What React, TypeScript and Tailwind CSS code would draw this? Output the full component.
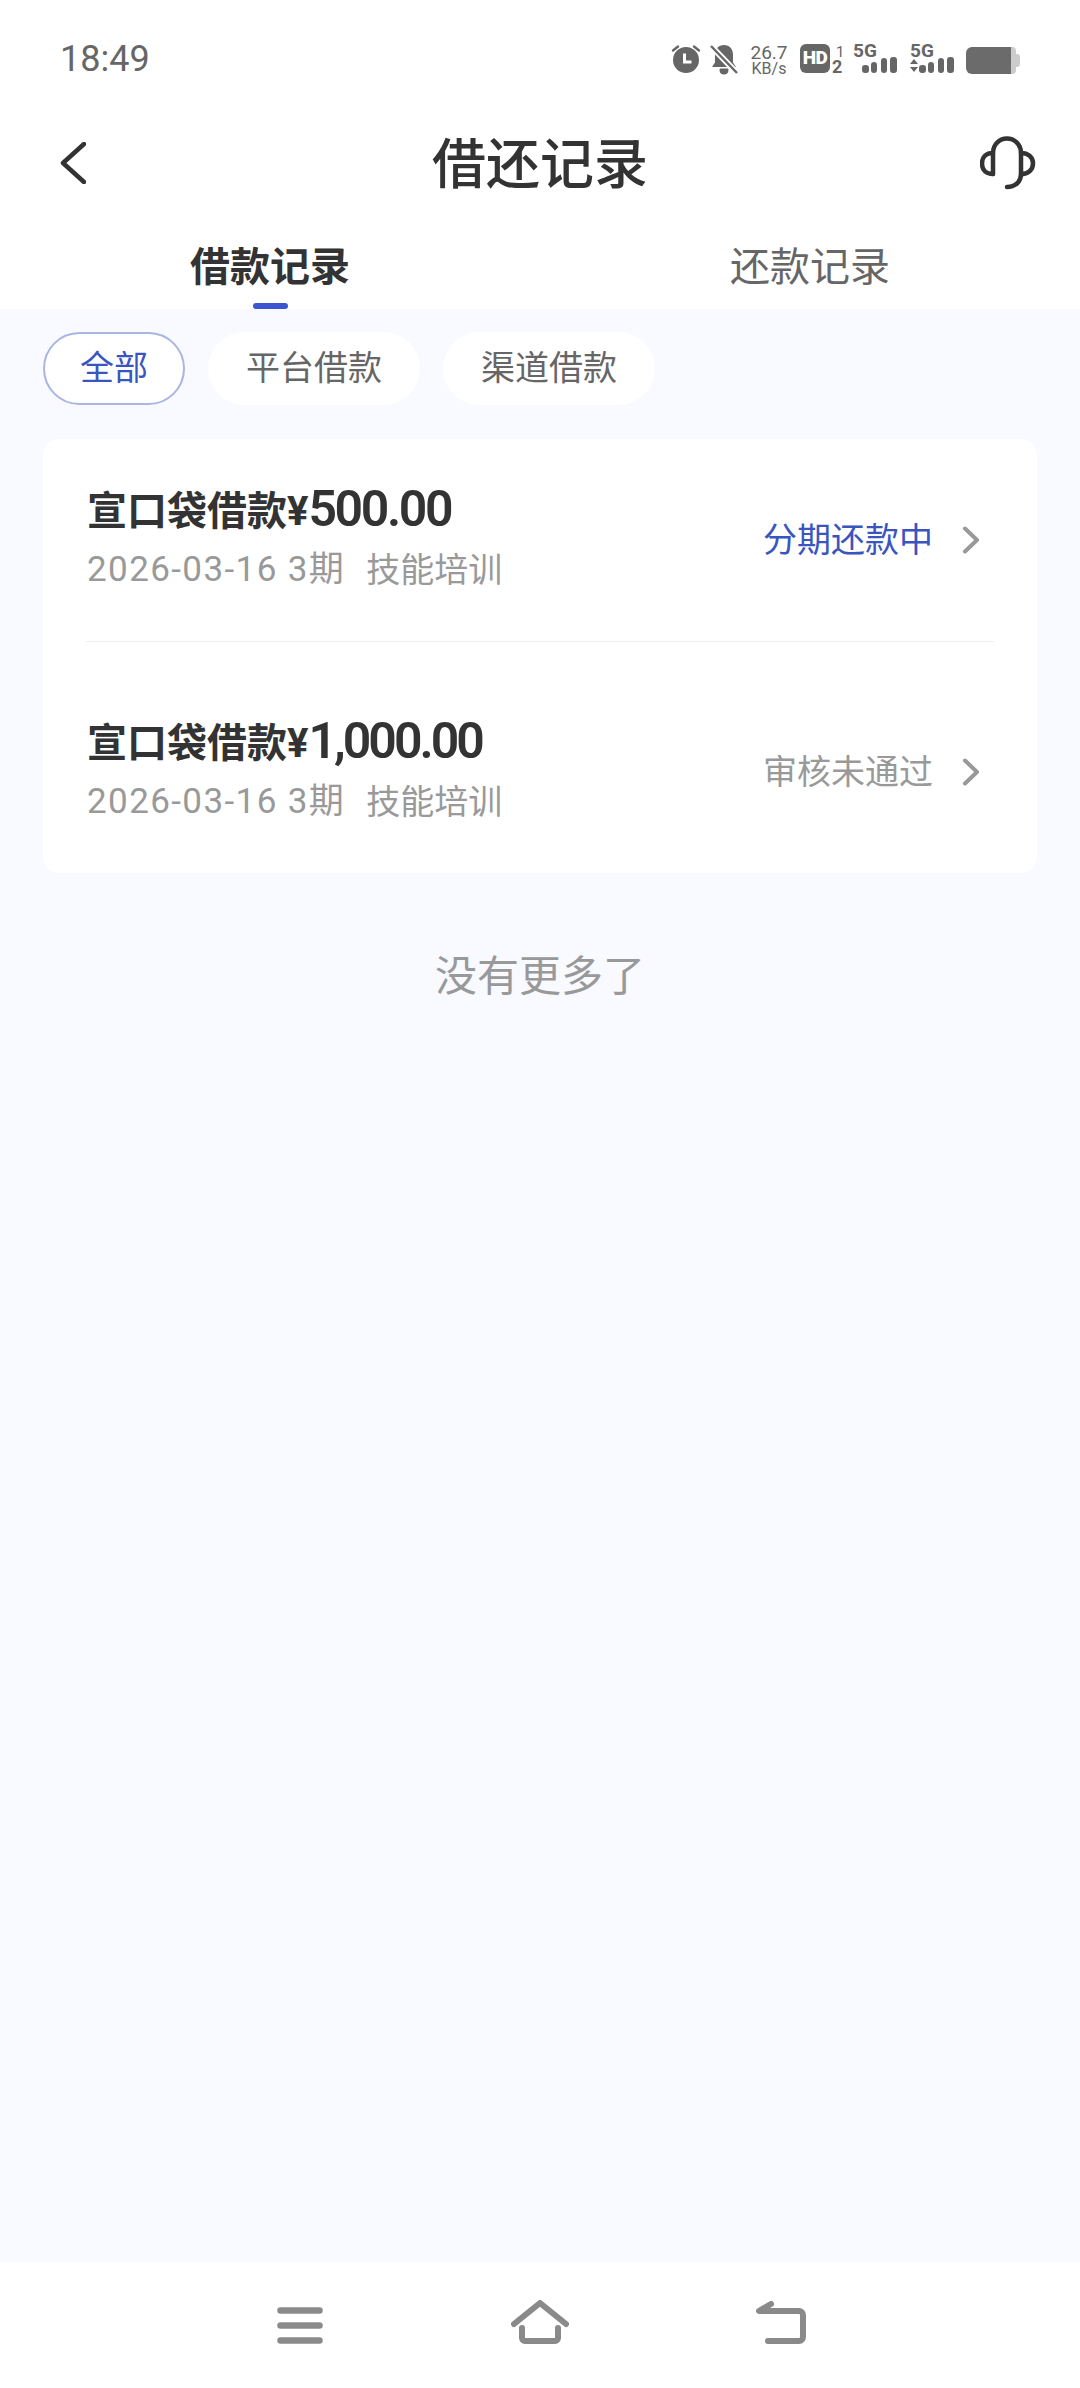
const font = 'font-["Roboto","Noto_Sans_CJK_SC",sans-serif]'

function AlarmIcon() {
  return (
    <svg width="30" height="29" viewBox="0 0 30 29" fill="none">
      <circle cx="15" cy="16" r="13" fill="#666" />
      <path d="M2 6.500 7 2.500M28 6.500 23 2.500" stroke="#666" strokeWidth="2.400" strokeLinecap="round" />
      <path d="M13.500 9.500v8.500h7" stroke="#fff" strokeWidth="3" fill="none" />
    </svg>
  )
}

function BellOffIcon() {
  return (
    <svg width="28" height="31" viewBox="0 0 28 31" fill="none">
      <path d="M14 1c5.500 0 9 4 9 9.500v8l3 4.500H2l3-4.500v-8C5 5 8.500 1 14 1Z" fill="#666" />
      <path d="M10.500 25.500h7c0 2.500-1.500 4-3.500 4s-3.500-1.500-3.500-4Z" fill="#666" stroke="#666" strokeWidth="2" strokeLinejoin="round" />
      <path d="M1 2 27 29" stroke="#fff" strokeWidth="6" />
      <path d="M1 2 27 29" stroke="#666" strokeWidth="2.400" />
    </svg>
  )
}

function SignalBars({ arrows }: { arrows?: boolean }) {
  return (
    <svg width="44" height="16" viewBox="0 0 44 16" fill="#666">
      {arrows && <path d="M0 7h8L4 2ZM0 10h8l-4 5Z" />}
      <rect x="9" y="8" width="7" height="8" rx="3" />
      <rect x="18" y="5" width="6" height="11" rx="3" />
      <rect x="28" y="1" width="6" height="15" rx="3" />
      <rect x="37" y="0" width="7" height="16" rx="3" />
    </svg>
  )
}

function NetworkIcon({ arrows }: { arrows?: boolean }) {
  return (
    <div className="flex w-[44px] flex-col">
      <span className="h-[13px] text-[19px] leading-[13px] font-bold text-[#666]">5G</span>
      <SignalBars arrows={arrows} />
    </div>
  )
}

function Battery() {
  return (
    <svg width="54" height="27" viewBox="0 0 54 27">
      <path d="M44 0h2a4 4 0 0 1 4 4v3h1a3 3 0 0 1 3 3v7a3 3 0 0 1-3 3h-1v3a4 4 0 0 1-4 4h-2Z" fill="#ccc" />
      <path d="M6 0h39v27H6a6 6 0 0 1-6-6V6a6 6 0 0 1 6-6Z" fill="#6b6b6b" />
    </svg>
  )
}

function StatusBar() {
  return (
    <div className="flex h-[118px] items-start justify-between pt-[44px] pl-[60px] pr-[60px]">
      <span className="text-[36px] leading-[30px] text-[#666]">18:49</span>
      <div className="flex items-start">
        <AlarmIcon />
        <div className="ml-[9px]">
          <BellOffIcon />
        </div>
        <div className="ml-[12px] flex w-[38px] flex-col items-center text-[#666]">
          <span className="text-[19px] leading-[18px]">26.7</span>
          <span className="text-[16px] leading-[14px]">KB/s</span>
        </div>
        <div className="ml-[12px] flex h-[29px] w-[30px] items-center justify-center rounded-[6px] bg-[#666] text-[19px] font-black tracking-[-0.5px] text-white">HD</div>
        <div className="ml-[2px] flex w-[21px] flex-col text-[#666]">
          <span className="pl-[4px] text-[15px] leading-[16px]">1</span>
          <span className="text-[18px] leading-[14px] font-bold">2</span>
        </div>
        <NetworkIcon />
        <div className="ml-[13px]">
          <NetworkIcon arrows />
        </div>
        <div className="ml-[12px] mt-[3px]">
          <Battery />
        </div>
      </div>
    </div>
  )
}

function Header() {
  return (
    <div className="flex h-[94px] items-center justify-between pl-[60px] pr-[44px]">
      <div className="-mt-[4px] w-[56px]">
        <svg width="26" height="42" viewBox="0 0 26 42" fill="none">
          <path d="M24 2 3 21l21 19" stroke="#333" strokeWidth="4.500" strokeLinecap="round" strokeLinejoin="round" />
        </svg>
      </div>
      <span className="-ml-[16px] text-[54px] font-medium text-[#333]">借还记录</span>
      <svg className="-mt-[5px]" width="56" height="54" viewBox="0 0 56 54" fill="none" stroke="#333" strokeWidth="4.500" strokeLinecap="round">
        <path d="M13 38V17C13 8 20 2.500 27 2.500S41 8 41 17V38C41 46 35 51 27 51" />
        <path d="M13 17C6 17 2 21 2 27.500S6 38 13 38M41 17c7 0 12 4 12 10.500S48 38 41 38" />
      </svg>
    </div>
  )
}

function Tabs() {
  return (
    <div className="flex h-[97px]">
      <div className="relative flex flex-1 items-center justify-center pt-[14px] text-[40px] font-bold text-[#333]">
        借款记录
        <div className="absolute bottom-0 left-[253px] h-[6px] w-[35px] rounded-[3px] bg-[#3a55cf]" />
      </div>
      <div className="flex flex-1 items-center justify-center pt-[14px] text-[40px] text-[#666]">还款记录</div>
    </div>
  )
}

function Chips() {
  return (
    <div className="flex gap-[23px] px-[43px] pt-[23px] text-[34px]">
      <div className="flex h-[73px] w-[142px] items-center justify-center rounded-full border-2 border-[#aab5e2] bg-white text-[#3a55c0]">全部</div>
      <div className="flex h-[73px] w-[212px] items-center justify-center rounded-full bg-white text-[#666]">平台借款</div>
      <div className="flex h-[73px] w-[212px] items-center justify-center rounded-full bg-white text-[#666]">渠道借款</div>
    </div>
  )
}

function LoanRow({ amount, amountClass, status, statusColor }: { amount: string; amountClass: string; status: string; statusColor: string }) {
  return (
    <div className="flex h-[202px] items-center justify-between pl-[44px] pr-[57px]">
      <div className="flex flex-col">
        <div className="flex h-[60px] items-center text-[40px] font-bold text-[#333]">
          <span>宣口袋借款¥</span>
          <span className={`-mt-[5px] text-[50px] font-semibold ${amountClass}`}>{amount}</span>
        </div>
        <div className="flex h-[56px] items-center text-[35px] tracking-[1.4px] text-[#999]">
          <span>2026-03-16 3期</span>
          <span className="ml-[21px] text-[34px] tracking-normal">技能培训</span>
        </div>
      </div>
      <div className="flex items-center">
        <span className={`text-[34px] ${statusColor}`}>{status}</span>
        <svg className="ml-[29px]" width="18" height="28" viewBox="0 0 18 28" fill="none">
          <path d="M3 2.500 15 14 3 25.500" stroke="#999" strokeWidth="4" strokeLinecap="round" strokeLinejoin="round" />
        </svg>
      </div>
    </div>
  )
}

function BottomNav() {
  return (
    <div className="flex h-[126px] items-center bg-white pb-[7px]">
      <div className="flex w-full items-end pl-[277px]">
        <svg width="46" height="37" viewBox="0 0 46 37" fill="none" stroke="#8a8a8a" strokeWidth="6.500" strokeLinecap="round">
          <path d="M3.500 3.500h39M3.500 18.500h39M3.500 33.500h39" />
        </svg>
        <svg className="ml-[188px]" width="58" height="44" viewBox="0 0 58 44" fill="none" stroke="#8a8a8a" strokeWidth="6" strokeLinecap="round" strokeLinejoin="round">
          <path d="M3 24 29 3l26 21" />
          <path d="M11 28v10a3 3 0 0 0 3 3h30a3 3 0 0 0 3-3V28" />
        </svg>
        <svg className="ml-[187px]" width="50" height="43" viewBox="0 0 50 43" fill="none" stroke="#8a8a8a" strokeWidth="6" strokeLinecap="round" strokeLinejoin="round">
          <path d="M15 3 3 10h40a4 4 0 0 1 4 4v22a4 4 0 0 1-4 4H12" />
        </svg>
      </div>
    </div>
  )
}

export default function App() {
  return (
    <div className={`flex h-[2388px] w-[1080px] flex-col bg-[#f8faff] ${font}`}>
      <div className="bg-white">
        <StatusBar />
        <Header />
        <Tabs />
      </div>
      <div className="flex-1">
        <Chips />
        <div className="mx-[43px] mt-[34px] rounded-[16px] bg-white">
          <LoanRow amount="500.00" amountClass="tracking-[-2.4px]" status="分期还款中" statusColor="text-[#3a55c0]" />
          <div className="mx-[43px] mb-[29px] h-px bg-[#eeeeee]" />
          <LoanRow amount="1,000.00" amountClass="tracking-[-3px]" status="审核未通过" statusColor="text-[#999]" />
        </div>
        <div className="mt-[72px] text-center text-[42px] text-[#999]">没有更多了</div>
      </div>
      <BottomNav />
    </div>
  )
}
